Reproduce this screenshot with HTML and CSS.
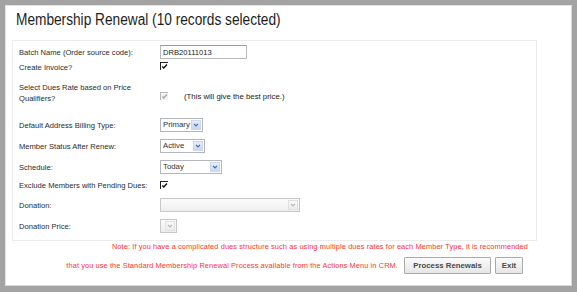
FILE: index.html
```html
<!DOCTYPE html>
<html lang="en">
<head>
  <meta charset="UTF-8">
  <title>Membership Renewal</title>
  <link rel="stylesheet" href="styles.css">
</head>
<body>
  <div class="dialog">
    <h1 class="dialog-title"><span>Membership Renewal (10 records selected)</span></h1>

    <div class="panel">
      <div class="row row-batch">
        <label class="field-label">Batch Name (Order source code):</label>
        <input class="text-input" type="text" value="DRB20111013">
      </div>
      <div class="row row-invoice">
        <label class="field-label">Create Invoice?</label>
        <span class="check"><svg viewBox="0 0 8 8"><path d="M1.5 4 L3.2 5.8 L6.8 1.8" /></svg></span>
      </div>
      <div class="row row-dues">
        <label class="field-label">Select Dues Rate based on Price<br>Qualifiers?</label>
        <span class="check check-disabled"><svg viewBox="0 0 8 8"><path d="M1.5 4 L3.2 5.8 L6.8 1.8" /></svg></span>
        <span class="hint">(This will give the best price.)</span>
      </div>
      <div class="row row-billing">
        <label class="field-label">Default Address Billing Type:</label>
        <div class="select w-primary"><span class="select-value">Primary</span><span class="select-arrow"><svg viewBox="0 0 10 10"><path d="M2.5 3.5 L5 6 L7.5 3.5" /></svg></span></div>
      </div>
      <div class="row row-status">
        <label class="field-label">Member Status After Renew:</label>
        <div class="select w-active"><span class="select-value">Active</span><span class="select-arrow"><svg viewBox="0 0 10 10"><path d="M2.5 3.5 L5 6 L7.5 3.5" /></svg></span></div>
      </div>
      <div class="row row-schedule">
        <label class="field-label">Schedule:</label>
        <div class="select w-today"><span class="select-value">Today</span><span class="select-arrow"><svg viewBox="0 0 10 10"><path d="M2.5 3.5 L5 6 L7.5 3.5" /></svg></span></div>
      </div>
      <div class="row row-exclude">
        <label class="field-label">Exclude Members with Pending Dues:</label>
        <span class="check"><svg viewBox="0 0 8 8"><path d="M1.5 4 L3.2 5.8 L6.8 1.8" /></svg></span>
      </div>
      <div class="row row-donation">
        <label class="field-label">Donation:</label>
        <div class="select select-disabled w-donation"><span class="select-value"></span><span class="select-arrow"><svg viewBox="0 0 10 10"><path d="M2.5 3.5 L5 6 L7.5 3.5" /></svg></span></div>
      </div>
      <div class="row row-price">
        <label class="field-label">Donation Price:</label>
        <div class="select select-disabled w-price"><span class="select-value"></span><span class="select-arrow"><svg viewBox="0 0 10 10"><path d="M2.5 3.5 L5 6 L7.5 3.5" /></svg></span></div>
      </div>
    </div>

    <div class="footer">
      <p class="note">Note: If you have a complicated dues structure such as using multiple dues rates for each Member Type, it is recommended</p>
      <div class="footer-row">
        <p class="note">that you use the Standard Membership Renewal Process available from the Actions Menu in CRM.</p>
        <button class="btn btn-process">Process Renewals</button>
        <button class="btn btn-exit">Exit</button>
      </div>
    </div>
  </div>
</body>
</html>
```

FILE: styles.css
```css
* {
  margin: 0;
  padding: 0;
  box-sizing: border-box;
}

body {
  font-family: 'Liberation Sans', Arial, sans-serif;
  background: #ffffff;
  color: #333;
}

.dialog {
  width: 577px;
  height: 292px;
  background: #fff;
  border-style: solid;
  border-color: #a3a3a3;
  border-width: 5px 5px 6px 5px;
  box-shadow: inset 1px 1px 0 #e4e4e4, inset -1px -1px 0 #d8d8d8;
}

.dialog-title {
  font-size: 16px;
  font-weight: normal;
  color: #1e1e1e;
  padding: 5px 0 0 11px;
  line-height: 20px;
  height: 35px;
  white-space: nowrap;
}

.dialog-title span {
  display: inline-block;
  transform: scaleX(0.855);
  transform-origin: left center;
}

.panel {
  margin-left: 7px;
  width: 525px;
  height: 201px;
  border: 1px solid #ececec;
  padding: 4px 0 0 6px;
}

.row {
  display: grid;
  grid-template-columns: 141px auto 1fr;
  align-items: center;
  height: 14px;
  font-size: 7.6px;
}

.field-label {
  color: #2b2b2b;
  line-height: 11px;
}

.row-invoice {
  align-items: start;
}

.row-invoice .field-label {
  padding-top: 3px;
}

.row-dues {
  margin-top: 9px;
  height: 22px;
}

.row-billing { margin-top: 14px; }
.row-status { margin-top: 7px; }
.row-schedule { margin-top: 7px; }
.row-exclude { margin-top: 4px; }
.row-donation { margin-top: 6px; }
.row-price { margin-top: 7px; }

.text-input {
  width: 87px;
  height: 14px;
  border: 1px solid #b9b9b9;
  border-top-color: #9a9a9a;
  font-family: inherit;
  font-size: 7.6px;
  color: #222;
  padding: 0 2px;
  outline: none;
}

.check {
  width: 8px;
  height: 8px;
  display: block;
  border-left: 1px solid #222;
  border-top: 1px solid #222;
  background: #fff;
}

.row-invoice .check {
  margin-top: 3px;
}

.row-dues .check {
  margin-top: 6px;
}

.check svg {
  display: block;
  width: 7px;
  height: 7px;
}

.check path {
  fill: none;
  stroke: #111;
  stroke-width: 1.6;
}

.check-disabled {
  border-color: #b8b8b8;
  background: #f2f2f2;
}

.check-disabled path {
  stroke: #a8a8a8;
}

.hint {
  font-size: 7.8px;
  color: #222;
  padding-left: 16px;
  margin-top: 6px;
}

.select {
  height: 14px;
  display: flex;
  align-items: center;
  border: 1px solid #b3b6bb;
  background: #fff;
  padding-right: 1px;
}

.select-value {
  flex: 1;
  font-size: 7.8px;
  color: #333;
  line-height: 12px;
  padding-left: 2px;
}

.select-arrow {
  width: 10px;
  height: 10px;
  background: linear-gradient(#e6eefc, #c6d6f3);
  border: 1px solid #cbd8f0;
}

.select-arrow svg {
  display: block;
  width: 8px;
  height: 8px;
}

.select-arrow path {
  fill: none;
  stroke: #4d68a8;
  stroke-width: 1.5;
}

.select-disabled {
  border-color: #c8c8c8;
  background: linear-gradient(#fbfbfb, #eeeeee);
}

.select-disabled .select-arrow {
  background: linear-gradient(#f8f8f8, #ececec);
  border-color: #e0e0e0;
}

.select-disabled .select-arrow path {
  stroke: #b8b8b8;
}

.w-primary { width: 43px; }
.w-active { width: 45px; }
.w-today { width: 62px; }
.w-donation { width: 140px; }
.w-price { width: 17px; }

.footer {
  padding-right: 44px;
  text-align: right;
}

.note {
  color: #ff3333;
  font-size: 7.4px;
  letter-spacing: 0.1px;
  line-height: 10px;
  padding-top: 1px;
}

.footer-row {
  display: flex;
  align-items: center;
  justify-content: flex-end;
  gap: 4px;
  margin-top: 5px;
  padding-right: 10px;
}

.footer-row .note {
  margin-right: 2px;
  padding-top: 0;
}

.btn {
  height: 17px;
  font-family: inherit;
  font-size: 7.8px;
  font-weight: bold;
  color: #4a4a4a;
  background: linear-gradient(#fbfbfb, #e6e6e6);
  border: 1px solid #aaa;
  border-radius: 1px;
}

.btn-process { width: 87px; }
.btn-exit { width: 28px; margin-right: -5px; }
```
